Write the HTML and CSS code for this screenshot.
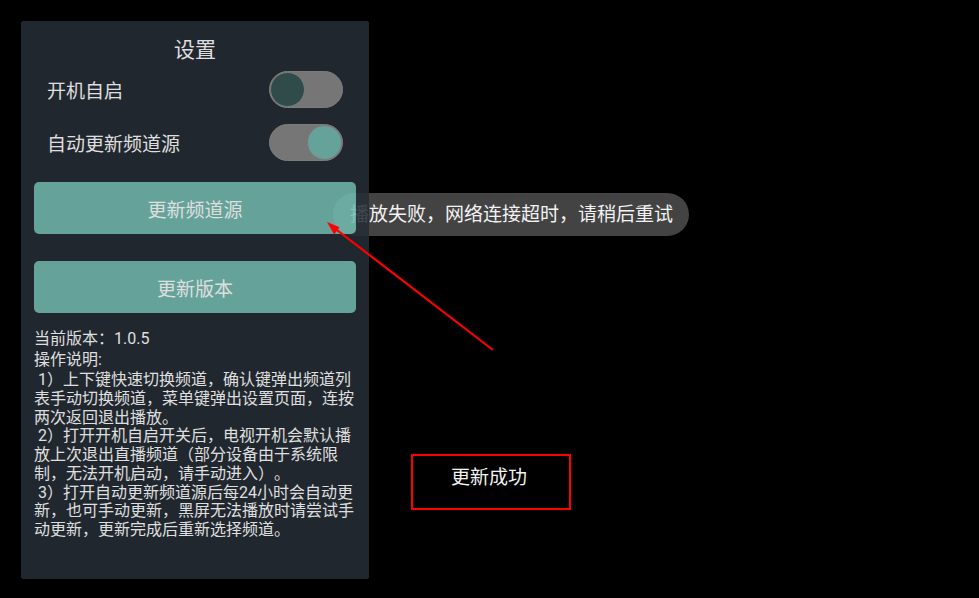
FILE: index.html
```html
<!DOCTYPE html>
<html lang="zh-CN">
<head>
<meta charset="utf-8">
<title>设置</title>
<link rel="stylesheet" href="styles.css">
</head>
<body>
<div class="screen">
  <div class="toast">播放失败，网络连接超时，请稍后重试</div>

  <div class="panel">
    <div class="title">设置</div>
    <div class="row">
      <span class="label">开机自启</span>
      <span class="switch"><span class="thumb"></span></span>
    </div>
    <div class="row row-second">
      <span class="label">自动更新频道源</span>
      <span class="switch on"><span class="thumb"></span></span>
    </div>
    <div class="btn btn-first">更新频道源</div>
    <div class="btn btn-second">更新版本</div>
    <div class="info">
      <div class="version">当前版本：1.0.5</div>
      <div class="howto">操作说明:</div>
      <div class="body">
        <p>&nbsp;1<span class="paren">）</span>上下键快速切换频道，确认键弹出频道列<br>表手动切换频道，菜单键弹出设置页面，连按<br>两次返回退出播放。</p>
        <p>&nbsp;2<span class="paren">）</span>打开开机自启开关后，电视开机会默认播<br>放上次退出直播频道<span class="paren">（</span>部分设备由于系统限<br>制，无法开机启动，请手动进入<span class="paren">）</span>。</p>
        <p>&nbsp;3<span class="paren">）</span>打开自动更新频道源后每24小时会自动更<br>新，也可手动更新，黑屏无法播放时请尝试手<br>动更新，更新完成后重新选择频道。</p>
      </div>
    </div>
  </div>

  <div class="success">更新成功</div>

  <svg class="arrow" width="979" height="598" viewBox="0 0 979 598">
    <line x1="493" y1="350" x2="333" y2="227" stroke="#ff0000" stroke-width="2.2"/>
    <polygon points="327,222 334.1,234.5 339.6,227.3" fill="#ff0000"/>
  </svg>
</div>
</body>
</html>
```
FILE: styles.css
```css
html, body {
  margin: 0;
  padding: 0;
  background: #000;
}

body {
  font-family: Roboto, "Noto Sans CJK SC", sans-serif;
  color: #ececec;
}

.screen {
  position: relative;
  width: 979px;
  height: 598px;
  overflow: hidden;
  padding: 21px 0 0 21px;
  box-sizing: border-box;
}

.toast {
  position: absolute;
  left: 333px;
  top: 193px;
  width: 356px;
  height: 43px;
  box-sizing: border-box;
  border-radius: 22px;
  background: #434343;
  color: #f2f2f2;
  font-size: 19px;
  line-height: 43px;
  padding-left: 17px;
  white-space: nowrap;
}

.panel {
  position: relative;
  z-index: 2;
  width: 348px;
  height: 558px;
  box-sizing: border-box;
  background: #262d35;
  border-radius: 2px;
  opacity: 0.87;
  padding-top: 15px;
  display: flex;
  flex-direction: column;
}

.title {
  text-align: center;
  font-size: 21px;
  line-height: 29px;
  color: #ffffff;
}

.row {
  display: flex;
  justify-content: space-between;
  align-items: center;
  padding: 0 26px 0 26px;
  margin-top: 6px;
  height: 37px;
}

.row-second {
  margin-top: 16px;
}

.label {
  font-size: 19px;
  line-height: 24px;
  color: #ffffff;
  margin-top: 4px;
}

.switch {
  position: relative;
  width: 74px;
  height: 37px;
  box-sizing: border-box;
  border-radius: 19px;
  background: #888888;
  border: 1px solid #8f8f8f;
}

.thumb {
  position: absolute;
  top: 0;
  left: 0;
  width: 35px;
  height: 35px;
  box-sizing: border-box;
  border-radius: 50%;
  background: #365756;
  border: 1.5px solid #8d8d8d;
}

.switch.on .thumb {
  left: auto;
  right: 0;
  background: #73bbb1;
}

.btn {
  margin: 0 13px;
  height: 52px;
  border-radius: 5px;
  background: #73bbb1;
  color: #ffffff;
  font-size: 19px;
  display: flex;
  align-items: center;
  justify-content: center;
}

.btn-first {
  margin-top: 21px;
}

.btn-second {
  margin-top: 27px;
}

.info {
  padding: 0 13px;
  margin-top: 16px;
  font-size: 16px;
  color: #ffffff;
}

.version {
  line-height: 19px;
}

.howto {
  line-height: 19px;
  margin-top: 2px;
}

.body {
  margin-top: 2px;
}

.body p {
  margin: 0;
  line-height: 18.75px;
  white-space: nowrap;
}

.paren {
  display: inline-block;
  width: 1em;
  line-height: 1;
  text-align: center;
}

.success {
  position: absolute;
  left: 411px;
  top: 454px;
  width: 160px;
  height: 56px;
  box-sizing: border-box;
  border: 2px solid #ff0000;
  color: #f2f2f2;
  font-size: 19px;
  line-height: 20px;
  padding: 12px 0 0 38px;
  white-space: nowrap;
}

.arrow {
  position: absolute;
  left: 0;
  top: 0;
  z-index: 3;
  pointer-events: none;
}
```
